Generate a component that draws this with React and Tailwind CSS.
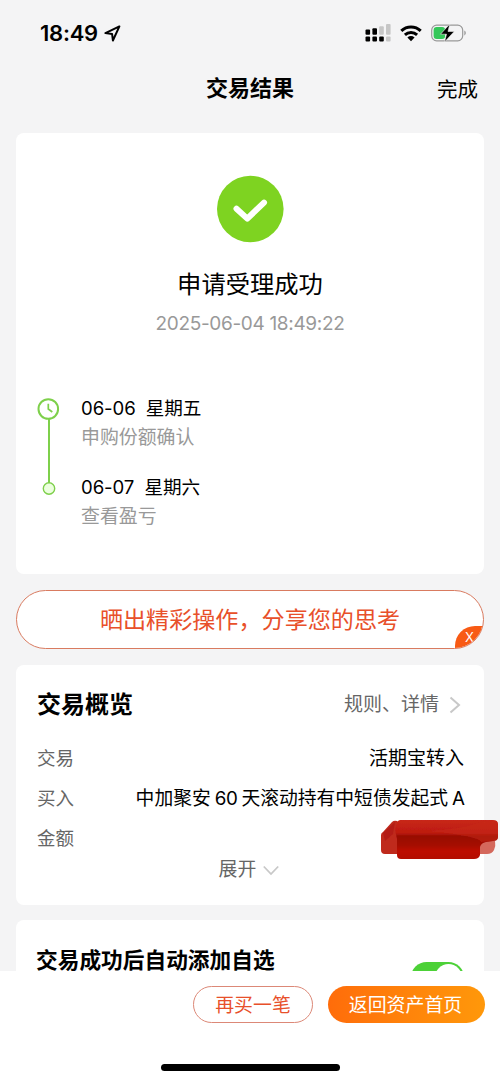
import React from "react";

const fontStyle = { fontFamily: 'Inter, "Noto Sans CJK SC", sans-serif' };

function StatusBar() {
  return (
    <div className="flex h-[66px] shrink-0 items-center justify-between pl-10 pr-[33px]">
      <div className="flex items-center gap-[6px]">
        <span className="text-[22px] leading-[24px] font-semibold tracking-[-0.25px]">18:49</span>
        <svg width="17" height="17" viewBox="0 0 17 17" fill="none">
          <path d="M15.4 1.4 1.4 8.1l6.7.9.8 6.5 6.5-14.1Z" stroke="#000" strokeWidth="2" strokeLinejoin="round" />
        </svg>
      </div>
      <div className="flex items-center">
        <svg width="26" height="18" viewBox="0 0 26 18">
          <g fill="#000">
            <rect x="0.5" y="5.5" width="4.6" height="5.3" rx="1" />
            <rect x="7.4" y="4.3" width="4.6" height="6.5" rx="1" />
            <rect x="0.5" y="12.6" width="4.6" height="4.8" rx="1" />
            <rect x="7.4" y="12.6" width="4.6" height="4.8" rx="1" />
            <rect x="14.2" y="12.6" width="4.6" height="4.8" rx="1" />
          </g>
          <g fill="#c6c6c6">
            <rect x="14.2" y="2.3" width="4.6" height="8.5" rx="1" />
            <rect x="21" y="0" width="4.6" height="10.8" rx="1" />
            <rect x="21" y="12.6" width="4.6" height="4.8" rx="1" />
          </g>
        </svg>
        <svg className="ml-[9px]" width="22" height="17" viewBox="0 0 22 17">
          <g fill="none" stroke="#000" strokeWidth="3">
            <path d="M1.3 5.9C6.8.7 15.2.7 20.7 5.9" />
            <path d="M4.9 9.8c3.5-3.2 8.7-3.2 12.2 0" />
          </g>
          <path d="M7.4 12.4c2.1-1.8 5.1-1.8 7.2 0L11 16.3Z" fill="#000" />
        </svg>
        <svg className="ml-[9px]" width="36" height="20" viewBox="0 0 36 20">
          <rect x="0.7" y="2.2" width="31" height="15.6" rx="5" fill="none" stroke="#999" strokeWidth="1.2" />
          <path d="M33.3 7.6c2 .7 2 4.1 0 4.8Z" fill="#999" />
          <rect x="2.6" y="4" width="11.5" height="12" rx="3" fill="#34c759" />
          <path d="M18.8 1 9.5 11.2h6L13.5 19l9.8-10.6H17Z" fill="#000" stroke="#f4f4f4" strokeWidth="0.6" />
        </svg>
      </div>
    </div>
  );
}

function Header() {
  return (
    <div className="grid h-[67px] shrink-0 grid-cols-[1fr_auto_1fr] pt-[7px] pr-[22px]">
      <h1 className="col-start-2 ml-[22px] text-[22px] leading-[30px] font-bold">交易结果</h1>
      <button className="h-[34px] justify-self-end text-[20.5px] leading-[34px]">完成</button>
    </div>
  );
}

function ResultCard() {
  return (
    <section className="flex h-[441px] shrink-0 flex-col rounded-lg bg-white">
      <div className="flex flex-col items-center pt-[42px]">
        <svg width="68" height="68" viewBox="0 0 68 68">
          <circle cx="34.3" cy="34" r="33.3" fill="#7ed321" />
          <path d="M20.5 33.8 31.3 43.6 48 27.6" fill="none" stroke="#fff" strokeWidth="6" strokeLinecap="round" strokeLinejoin="round" />
        </svg>
        <h2 className="mt-[23px] text-[24.3px] leading-[36px]">申请受理成功</h2>
        <p className="mt-[8px] text-[19px] leading-[28px] tracking-[-0.33px] text-[#999]">2025-06-04 18:49:22</p>
      </div>

      <div className="mt-[56px] flex pl-[21px]">
        <svg className="shrink-0" width="24" height="104" viewBox="0 0 24 104" fill="none" stroke="#7ed04b">
          <circle cx="11.3" cy="15" r="9.8" strokeWidth="2" />
          <path d="M11.3 9.8v5.2l4 3" strokeWidth="1.7" />
          <path d="M12 25v64" strokeWidth="2" />
          <circle cx="12" cy="94.5" r="5.7" fill="#ecffdf" strokeWidth="1.4" />
        </svg>
        <ol className="ml-5 pt-px">
          <li>
            <p className="text-[18.6px] leading-[26px] tracking-[-0.1px] whitespace-pre">06-06  星期五</p>
            <p className="text-[18.9px] leading-[34px] text-[#999]">申购份额确认</p>
          </li>
          <li className="mt-[19px]">
            <p className="text-[18.6px] leading-[26px] tracking-[-0.1px] whitespace-pre">06-07  星期六</p>
            <p className="text-[18.9px] leading-[34px] text-[#999]">查看盈亏</p>
          </li>
        </ol>
      </div>
    </section>
  );
}

function ShareBanner() {
  return (
    <div className="relative flex h-[59px] shrink-0 items-center justify-center overflow-hidden rounded-full border border-[#d97b60] bg-white">
      <span className="text-[23.1px] leading-[32px] text-[#e8502a]">晒出精彩操作，分享您的思考</span>
      <button className="absolute -right-px -bottom-px h-[23px] w-[29px] rounded-tl-[20px] bg-[#f85a14] text-[13px] leading-[23px] text-white">
        X
      </button>
    </div>
  );
}

// marker strokes over the amount
function Scribble() {
  return (
    <svg className="absolute top-[152px] left-[362px]" width="122" height="46" viewBox="0 0 122 46">
      <defs>
        <linearGradient id="ink" x1="0" y1="0" x2="0" y2="1">
          <stop offset="0" stopColor="#c8281a" />
          <stop offset="0.33" stopColor="#bd1a0f" />
          <stop offset="0.42" stopColor="#970a02" />
          <stop offset="0.65" stopColor="#a50a02" />
          <stop offset="0.8" stopColor="#bd0f04" />
          <stop offset="1" stopColor="#b30d04" />
        </linearGradient>
        <filter id="soft" x="-5%" y="-10%" width="110%" height="120%">
          <feGaussianBlur stdDeviation="0.6" />
        </filter>
      </defs>
      <g filter="url(#soft)">
        <path d="M5 15 14 5q2-2 5-1l3 2v31H7q-4 0-4-4V18q0-2 2-3Z" fill="#bf2a1d" />
        <path d="M100 24h17q1 5-1 9-2 4-7 4h-9Z" fill="#d4685c" />
        <path d="M22 3h93q5 0 5 4v13q0 4-5 4l-7 1q-5 1-6 5v8q-1 4-6 4H23q-4 0-4-4V22l-2-9 2-7Q20 3 22 3Z" fill="url(#ink)" />
        <path d="M50 14Q80 13 104 5l12-1q4 0 4 4v12q0 4-5 4l-12 1q-2-6-53-11Z" fill="#c72c1a" opacity="0.5" />
        <path d="M5 16 17 5l-2 12-8 7Z" fill="#a9140c" opacity="0.5" />
      </g>
    </svg>
  );
}

function OverviewCard() {
  return (
    <section className="relative flex h-[240px] shrink-0 flex-col rounded-lg bg-white pr-[20px] pl-[21px]">
      <div className="flex h-[74px] items-center justify-between pt-[5px]">
        <h2 className="text-[24px] leading-[36px] font-bold">交易概览</h2>
        <button className="flex items-center text-[19px] leading-[28px] text-[#666]">
          规则、详情
          <svg className="mr-[3px] ml-[10px]" width="12" height="18" viewBox="0 0 12 18" fill="none" stroke="#c8c8c8" strokeWidth="2">
            <path d="m1.5 1.5 8.5 7.5-8.5 7.5" />
          </svg>
        </button>
      </div>
      <div className="flex h-10 items-center justify-between">
        <span className="text-[18.5px] text-[#666]">交易</span>
        <span className="text-[19px]">活期宝转入</span>
      </div>
      <div className="flex h-10 items-center justify-between">
        <span className="text-[18.5px] text-[#666]">买入</span>
        <span className="mr-[-1px] flex text-[18.8px] whitespace-nowrap">
          中加聚安<span className="mx-[4px] tracking-[-0.4px]">60</span>天滚动持有中短债发起式<span className="ml-[4px]">A</span>
        </span>
      </div>
      <div className="flex h-10 items-center">
        <span className="text-[18.5px] text-[#666]">金额</span>
      </div>
      <button className="ml-[-3px] flex h-[22px] items-center justify-center text-[18.9px] leading-[22px] text-[#666]">
        展开
        <svg className="ml-[7px]" width="16" height="11" viewBox="0 0 16 11" fill="none" stroke="#c8c8c8" strokeWidth="1.8">
          <path d="m.8 1.5 7.2 7.5 7.2-7.5" />
        </svg>
      </button>
      <Scribble />
    </section>
  );
}

function WatchlistCard() {
  return (
    <section className="flex h-[80px] shrink-0 justify-between rounded-lg bg-white pr-[20px] pl-[20px]">
      <h2 className="pt-[24px] text-[21.7px] leading-[32px] font-bold">交易成功后自动添加自选</h2>
      <div className="mt-[42px] flex h-[31px] w-[53px] justify-end rounded-full bg-[#4cd137] p-[2px]">
        <div className="size-[27px] rounded-full bg-white" />
      </div>
    </section>
  );
}

function Footer() {
  return (
    <footer className="flex h-[110px] shrink-0 flex-col items-center bg-white">
      <div className="flex w-full justify-end gap-[15px] pt-[15px] pr-[15px]">
        <button className="h-[37px] w-[120px] rounded-full border border-[#dc8877] pt-[3px] text-[18.9px] text-[#e8502a]">
          再买一笔
        </button>
        <button className="h-[37px] w-[157px] rounded-full bg-linear-to-r from-[#ff6c0a] to-[#ff980a] pt-[3px] pr-[2px] text-[18.9px] text-white">
          返回资产首页
        </button>
      </div>
      <div className="mt-[41px] h-[7px] w-[179px] rounded-full bg-black" />
    </footer>
  );
}

function App() {
  return (
    <div style={fontStyle} className="flex h-[1081px] w-[500px] flex-col overflow-hidden bg-[#f4f4f5] text-black">
      <StatusBar />
      <Header />
      <main className="flex min-h-0 flex-1 flex-col overflow-hidden px-4">
        <ResultCard />
        <div className="h-4 shrink-0" />
        <ShareBanner />
        <div className="h-4 shrink-0" />
        <OverviewCard />
        <div className="h-[15px] shrink-0" />
        <WatchlistCard />
      </main>
      <Footer />
    </div>
  );
}

export default App;
